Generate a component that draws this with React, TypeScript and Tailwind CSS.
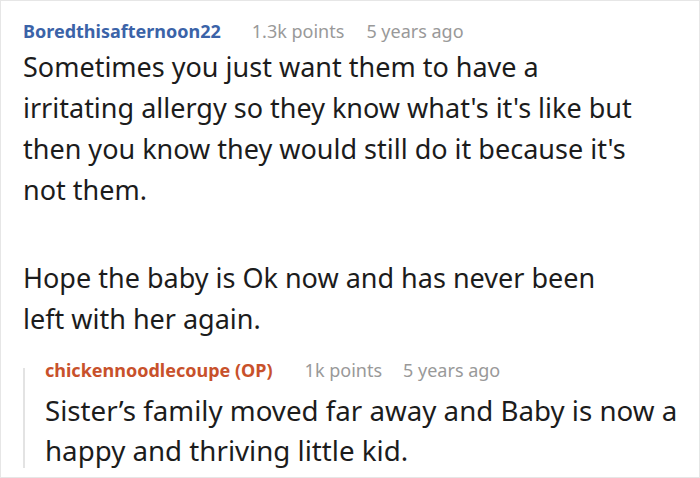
export default function App() {
  return (
    <div className="h-[478px] w-[700px] overflow-hidden border border-[#e6e6e6] bg-white font-['Noto_Sans',sans-serif] text-[#1c1c1c]">
      <div className="pl-[22px] pr-[10px] pt-[18px]">
        <div className="flex items-center gap-[31px] text-[18px] leading-[24px]">
          <span className="font-bold text-[#3b63a8]">Boredthisafternoon22</span>
          <div className="flex gap-[22px] text-[#999]">
            <span>1.3k points</span>
            <span>5 years ago</span>
          </div>
        </div>
        <div className="mt-[3px] text-[27px] leading-[41px]">
          <p>
            Sometimes you just want them to have a
            <br />
            irritating allergy so they know what's it's like but
            <br />
            then you know they would still do it because it's
            <br />
            not them.
          </p>
          <p className="mt-[47px] max-w-[620px]">Hope the baby is Ok now and has never been left with her again.</p>
        </div>
        <div className="mt-[19px] flex">
          <div className="mb-[2px] mt-[10px] w-[2px] shrink-0 bg-[#e3e3e3]" />
          <div className="pl-[20px]">
            <div className="flex items-center gap-[32px] text-[18px] leading-[24px]">
              <span className="font-bold text-[#c8512b]">chickennoodlecoupe (OP)</span>
              <div className="flex gap-[21px] text-[#999]">
                <span>1k points</span>
                <span>5 years ago</span>
              </div>
            </div>
            <p className="mt-[8px] text-[27.7px] leading-[40px]">
              Sister’s family moved far away and Baby is now a happy and thriving little kid.
            </p>
          </div>
        </div>
      </div>
    </div>
  );
}
